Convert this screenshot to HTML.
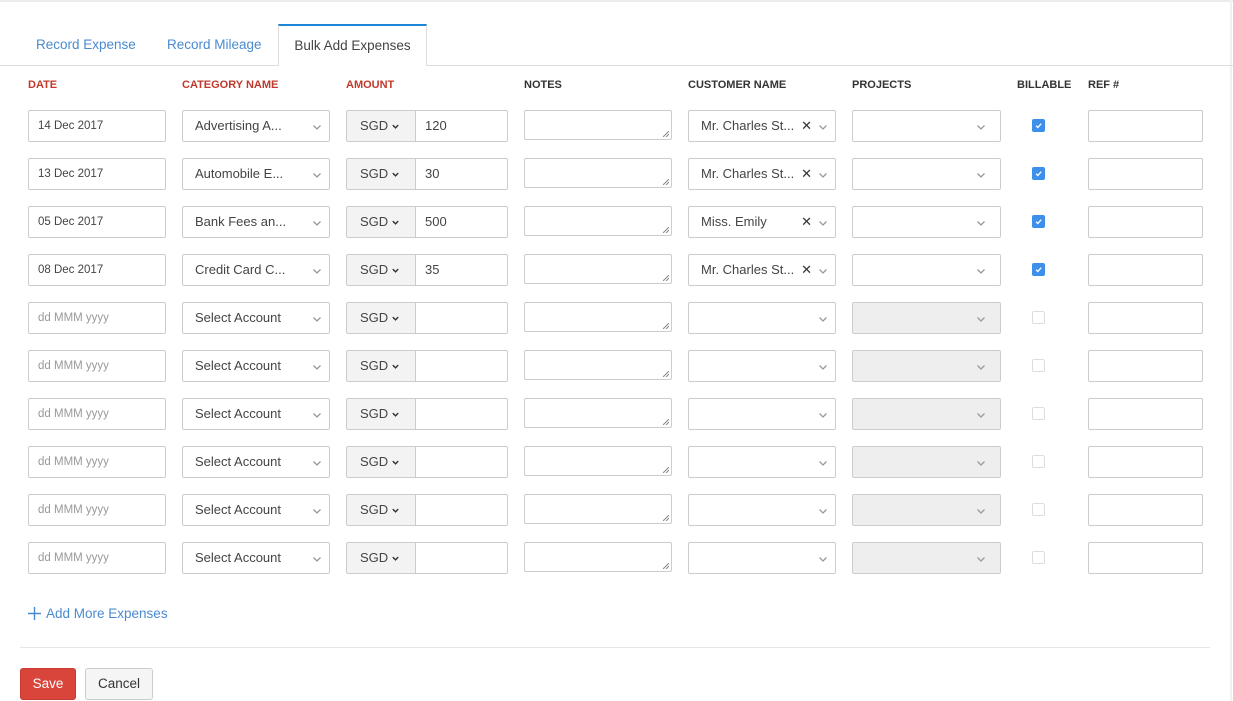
<!DOCTYPE html>
<html><head><meta charset="utf-8"><style>
*{box-sizing:border-box;margin:0;padding:0}
body{width:1233px;height:701px;background:#fff;font-family:"Liberation Sans",sans-serif;position:relative;overflow:hidden;color:#444}
.a{position:absolute}
.topl{left:0;top:0;width:1233px;height:2px;background:#ececec}
.vr{left:1230px;top:0;width:2px;height:701px;background:#f0f0f0}
.tabline{left:0;top:65px;width:1233px;height:1px;background:#ddd}
.tab{top:37px;font-size:13.5px;color:#4a8bd0}
.act{left:278px;top:24px;width:149px;height:42px;border:1px solid #ddd;border-top:2px solid #1e86d6;border-bottom:none;background:#fff;color:#444;font-size:13.5px;text-align:center;padding-top:12px}
.h{top:79px;font-size:11px;font-weight:bold;color:#333}
.r{color:#c0392b}
.row{position:absolute;left:0;width:1233px;height:32px}
.in{position:absolute;top:0;height:32px;border:1px solid #ccc;border-radius:2px;background:#fff;font-size:13px;padding:0 12px;line-height:30px;white-space:nowrap;overflow:hidden;color:#444}
.d{left:28px;width:138px;font-size:11.5px;padding-left:9px}
.ph{color:#999}
.c{left:182px;width:148px}
.s{left:346px;width:70px;background:#f3f3f3;border-radius:2px 0 0 2px;padding-left:13px}
.m{left:415px;width:93px;border-radius:0 2px 2px 0;padding-left:9px}
.n{left:524px;width:148px;height:30px}
.cu{left:688px;width:148px}
.p{left:852px;width:149px}
.dis{background:#eee}
.rf{left:1088px;width:115px}
.chev{position:absolute;right:7px;top:11px;width:10px;height:10px}
.x{position:absolute;right:23px;top:0;font-size:13px;color:#333}
.cb{position:absolute;left:1032px;top:9px;width:13px;height:13px;border-radius:2px}
.on{background:#3d8fea}
.off{border:1px solid #ddd;background:#fff}
.grip{position:absolute;right:2px;bottom:2px;width:6px;height:6px}
.sv{display:inline-block;width:9px;height:9px;margin-left:3px;vertical-align:-1px}
</style></head><body>
<svg width="0" height="0" style="position:absolute"><defs><symbol id="cv" viewBox="0 0 10 10"><path d="M1.5 3.5l3.5 3.5 3.5-3.5" fill="none" stroke="#999" stroke-width="1.3"/></symbol><symbol id="sv" viewBox="0 0 10 10"><path d="M2 3.5l3 3 3-3" fill="none" stroke="#333" stroke-width="1.6"/></symbol></defs></svg>
<div class="a topl"></div><div class="a vr"></div>
<div class="a tabline"></div>
<div class="a tab" style="left:36px">Record Expense</div>
<div class="a tab" style="left:167px">Record Mileage</div>
<div class="a act">Bulk Add Expenses</div>
<div class="a h r" style="left:28px">DATE</div>
<div class="a h r" style="left:182px">CATEGORY NAME</div>
<div class="a h r" style="left:346px">AMOUNT</div>
<div class="a h" style="left:524px">NOTES</div>
<div class="a h" style="left:688px">CUSTOMER NAME</div>
<div class="a h" style="left:852px">PROJECTS</div>
<div class="a h" style="left:1017px">BILLABLE</div>
<div class="a h" style="left:1088px">REF #</div>

<div class="row" style="top:110px">
<div class="in d">14 Dec 2017</div>
<div class="in c">Advertising A...<svg class="chev"><use href="#cv"/></svg></div>
<div class="in s">SGD<svg class="sv"><use href="#sv"/></svg></div><div class="in m">120</div>
<div class="in n"><svg class="grip" viewBox="0 0 6 6"><path d="M0 6L6 0M3 6L6 3" stroke="#888"/></svg></div>
<div class="in cu">Mr. Charles St...<span class="x">✕</span><svg class="chev"><use href="#cv"/></svg></div>
<div class="in p"><svg class="chev" style="right:14px"><use href="#cv"/></svg></div>
<div class="cb on"><svg viewBox="0 0 13 13" width="13" height="13"><path d="M4 6.7l1.8 1.8 3.4-3.8" fill="none" stroke="#fff" stroke-width="1.3"/></svg></div>
<div class="in rf"></div>
</div>
<div class="row" style="top:158px">
<div class="in d">13 Dec 2017</div>
<div class="in c">Automobile E...<svg class="chev"><use href="#cv"/></svg></div>
<div class="in s">SGD<svg class="sv"><use href="#sv"/></svg></div><div class="in m">30</div>
<div class="in n"><svg class="grip" viewBox="0 0 6 6"><path d="M0 6L6 0M3 6L6 3" stroke="#888"/></svg></div>
<div class="in cu">Mr. Charles St...<span class="x">✕</span><svg class="chev"><use href="#cv"/></svg></div>
<div class="in p"><svg class="chev" style="right:14px"><use href="#cv"/></svg></div>
<div class="cb on"><svg viewBox="0 0 13 13" width="13" height="13"><path d="M4 6.7l1.8 1.8 3.4-3.8" fill="none" stroke="#fff" stroke-width="1.3"/></svg></div>
<div class="in rf"></div>
</div>
<div class="row" style="top:206px">
<div class="in d">05 Dec 2017</div>
<div class="in c">Bank Fees an...<svg class="chev"><use href="#cv"/></svg></div>
<div class="in s">SGD<svg class="sv"><use href="#sv"/></svg></div><div class="in m">500</div>
<div class="in n"><svg class="grip" viewBox="0 0 6 6"><path d="M0 6L6 0M3 6L6 3" stroke="#888"/></svg></div>
<div class="in cu">Miss. Emily<span class="x">✕</span><svg class="chev"><use href="#cv"/></svg></div>
<div class="in p"><svg class="chev" style="right:14px"><use href="#cv"/></svg></div>
<div class="cb on"><svg viewBox="0 0 13 13" width="13" height="13"><path d="M4 6.7l1.8 1.8 3.4-3.8" fill="none" stroke="#fff" stroke-width="1.3"/></svg></div>
<div class="in rf"></div>
</div>
<div class="row" style="top:254px">
<div class="in d">08 Dec 2017</div>
<div class="in c">Credit Card C...<svg class="chev"><use href="#cv"/></svg></div>
<div class="in s">SGD<svg class="sv"><use href="#sv"/></svg></div><div class="in m">35</div>
<div class="in n"><svg class="grip" viewBox="0 0 6 6"><path d="M0 6L6 0M3 6L6 3" stroke="#888"/></svg></div>
<div class="in cu">Mr. Charles St...<span class="x">✕</span><svg class="chev"><use href="#cv"/></svg></div>
<div class="in p"><svg class="chev" style="right:14px"><use href="#cv"/></svg></div>
<div class="cb on"><svg viewBox="0 0 13 13" width="13" height="13"><path d="M4 6.7l1.8 1.8 3.4-3.8" fill="none" stroke="#fff" stroke-width="1.3"/></svg></div>
<div class="in rf"></div>
</div>

<div class="row" style="top:302px">
<div class="in d ph">dd MMM yyyy</div>
<div class="in c">Select Account<svg class="chev"><use href="#cv"/></svg></div>
<div class="in s">SGD<svg class="sv"><use href="#sv"/></svg></div><div class="in m"></div>
<div class="in n"><svg class="grip" viewBox="0 0 6 6"><path d="M0 6L6 0M3 6L6 3" stroke="#888"/></svg></div>
<div class="in cu"><svg class="chev"><use href="#cv"/></svg></div>
<div class="in p dis"><svg class="chev" style="right:14px"><use href="#cv"/></svg></div>
<div class="cb off"></div>
<div class="in rf"></div>
</div>
<div class="row" style="top:350px">
<div class="in d ph">dd MMM yyyy</div>
<div class="in c">Select Account<svg class="chev"><use href="#cv"/></svg></div>
<div class="in s">SGD<svg class="sv"><use href="#sv"/></svg></div><div class="in m"></div>
<div class="in n"><svg class="grip" viewBox="0 0 6 6"><path d="M0 6L6 0M3 6L6 3" stroke="#888"/></svg></div>
<div class="in cu"><svg class="chev"><use href="#cv"/></svg></div>
<div class="in p dis"><svg class="chev" style="right:14px"><use href="#cv"/></svg></div>
<div class="cb off"></div>
<div class="in rf"></div>
</div>
<div class="row" style="top:398px">
<div class="in d ph">dd MMM yyyy</div>
<div class="in c">Select Account<svg class="chev"><use href="#cv"/></svg></div>
<div class="in s">SGD<svg class="sv"><use href="#sv"/></svg></div><div class="in m"></div>
<div class="in n"><svg class="grip" viewBox="0 0 6 6"><path d="M0 6L6 0M3 6L6 3" stroke="#888"/></svg></div>
<div class="in cu"><svg class="chev"><use href="#cv"/></svg></div>
<div class="in p dis"><svg class="chev" style="right:14px"><use href="#cv"/></svg></div>
<div class="cb off"></div>
<div class="in rf"></div>
</div>
<div class="row" style="top:446px">
<div class="in d ph">dd MMM yyyy</div>
<div class="in c">Select Account<svg class="chev"><use href="#cv"/></svg></div>
<div class="in s">SGD<svg class="sv"><use href="#sv"/></svg></div><div class="in m"></div>
<div class="in n"><svg class="grip" viewBox="0 0 6 6"><path d="M0 6L6 0M3 6L6 3" stroke="#888"/></svg></div>
<div class="in cu"><svg class="chev"><use href="#cv"/></svg></div>
<div class="in p dis"><svg class="chev" style="right:14px"><use href="#cv"/></svg></div>
<div class="cb off"></div>
<div class="in rf"></div>
</div>
<div class="row" style="top:494px">
<div class="in d ph">dd MMM yyyy</div>
<div class="in c">Select Account<svg class="chev"><use href="#cv"/></svg></div>
<div class="in s">SGD<svg class="sv"><use href="#sv"/></svg></div><div class="in m"></div>
<div class="in n"><svg class="grip" viewBox="0 0 6 6"><path d="M0 6L6 0M3 6L6 3" stroke="#888"/></svg></div>
<div class="in cu"><svg class="chev"><use href="#cv"/></svg></div>
<div class="in p dis"><svg class="chev" style="right:14px"><use href="#cv"/></svg></div>
<div class="cb off"></div>
<div class="in rf"></div>
</div>
<div class="row" style="top:542px">
<div class="in d ph">dd MMM yyyy</div>
<div class="in c">Select Account<svg class="chev"><use href="#cv"/></svg></div>
<div class="in s">SGD<svg class="sv"><use href="#sv"/></svg></div><div class="in m"></div>
<div class="in n"><svg class="grip" viewBox="0 0 6 6"><path d="M0 6L6 0M3 6L6 3" stroke="#888"/></svg></div>
<div class="in cu"><svg class="chev"><use href="#cv"/></svg></div>
<div class="in p dis"><svg class="chev" style="right:14px"><use href="#cv"/></svg></div>
<div class="cb off"></div>
<div class="in rf"></div>
</div>

<svg class="a" style="left:27px;top:606px" width="15" height="15" viewBox="0 0 15 15"><path d="M7.5 1v13M1 7.5h13" stroke="#4a8bd0" stroke-width="1.4"/></svg>
<div class="a" style="left:46px;top:606px;font-size:13.5px;color:#4a8bd0">Add More Expenses</div>
<div class="a" style="left:20px;top:647px;width:1190px;height:1px;background:#e6e6e6"></div>
<div class="a" style="left:20px;top:668px;width:56px;height:32px;background:#d9453a;border:1px solid #c63a30;border-radius:3px;color:#fff;font-size:13.5px;text-align:center;line-height:30px">Save</div>
<div class="a" style="left:85px;top:668px;width:68px;height:32px;background:#f5f5f5;border:1px solid #ccc;border-radius:3px;color:#333;font-size:13.5px;text-align:center;line-height:30px">Cancel</div>
</body></html>
